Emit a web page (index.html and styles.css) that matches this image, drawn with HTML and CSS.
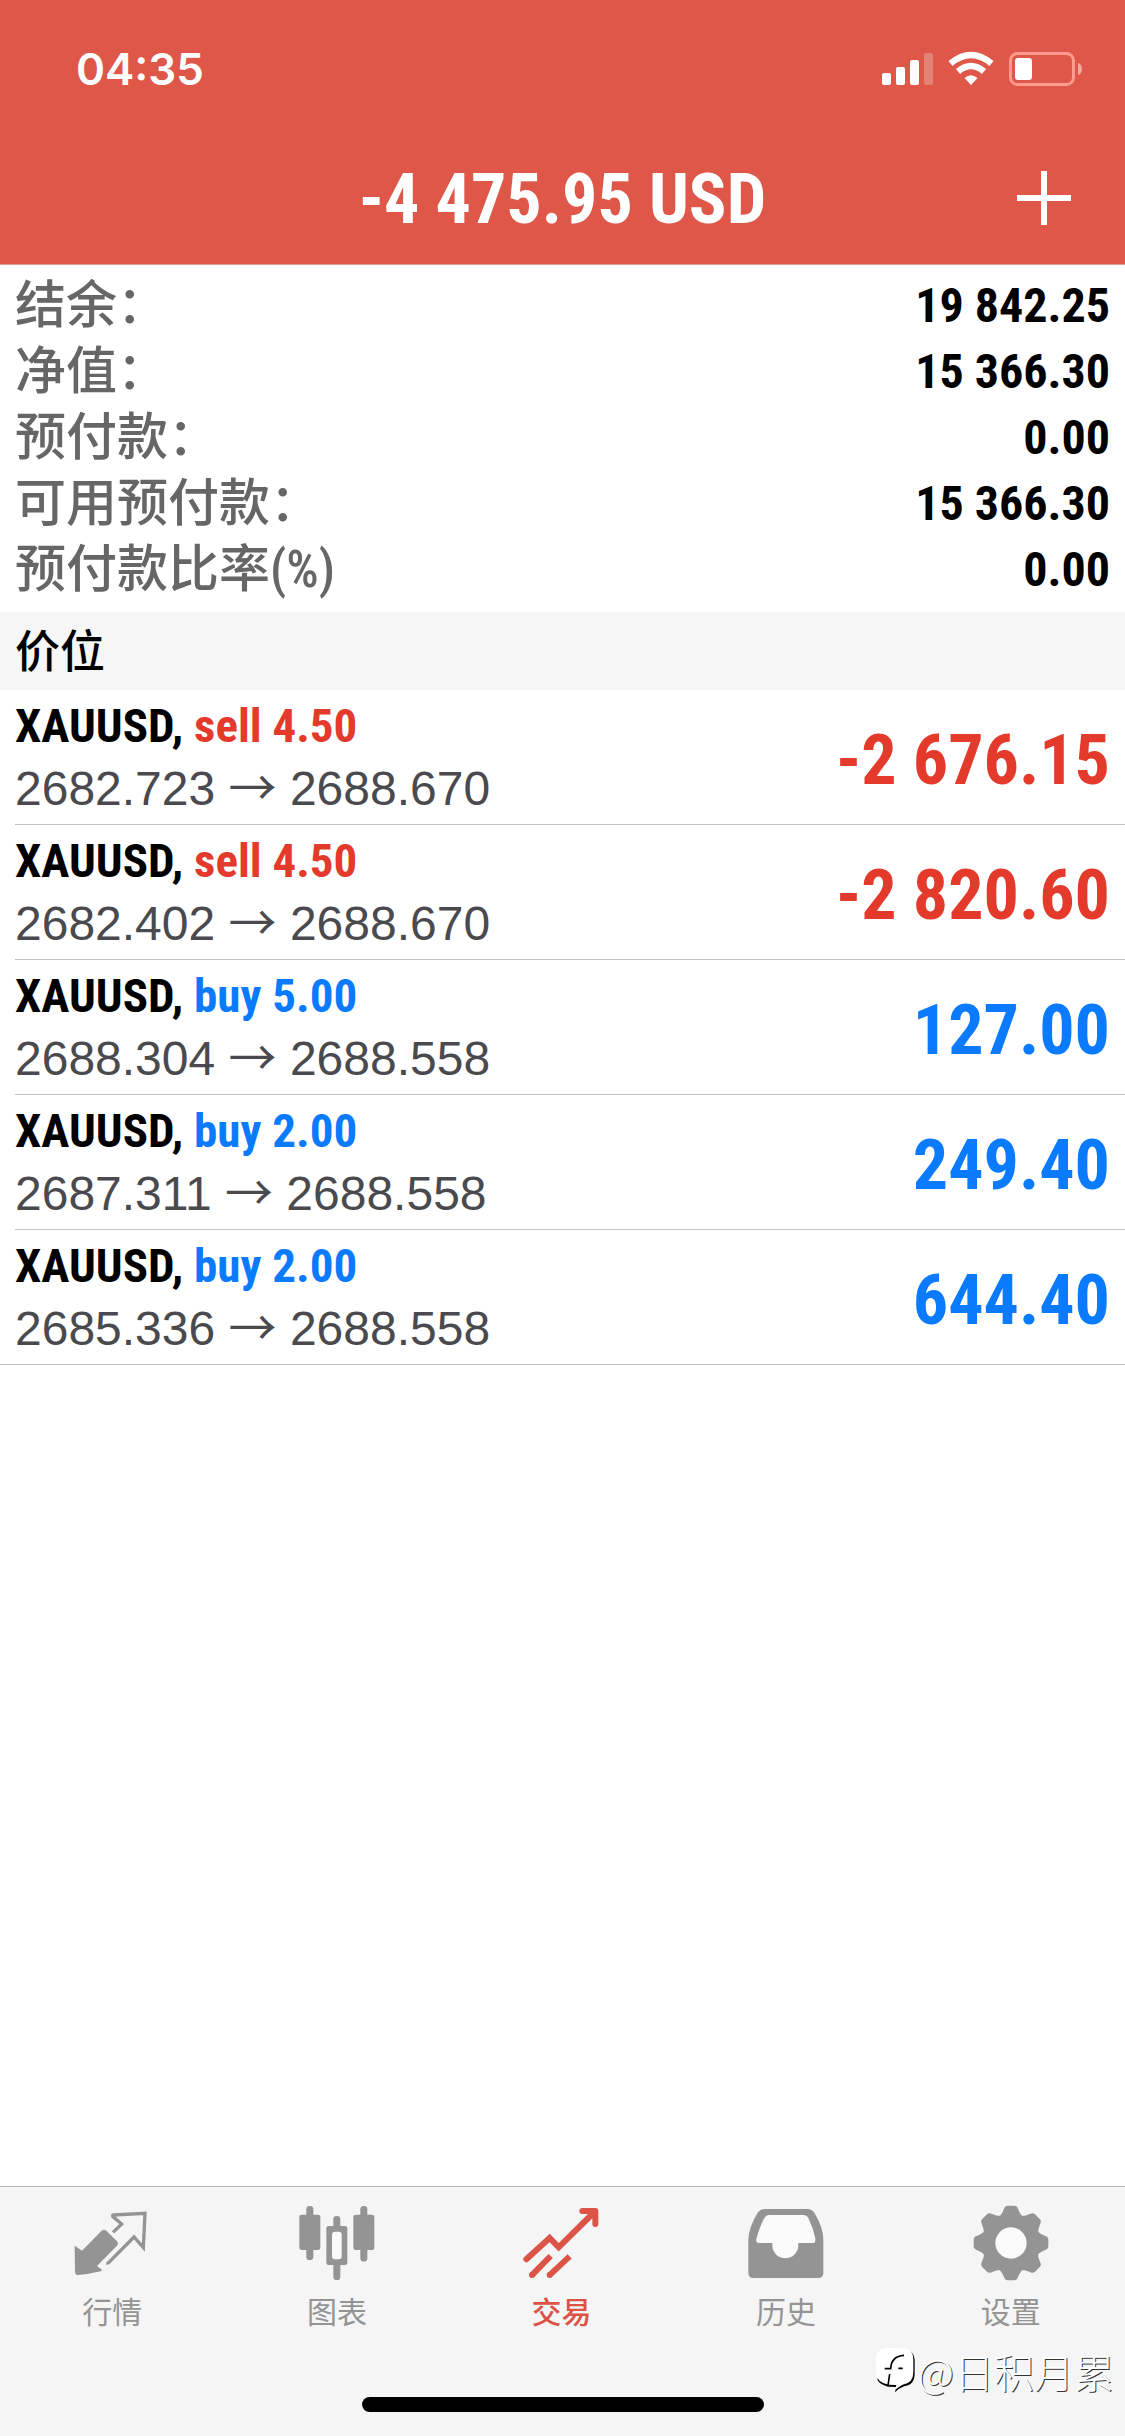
FILE: index.html
```html
<!DOCTYPE html>
<html lang="zh-CN">
<head>
<meta charset="utf-8">
<meta name="viewport" content="width=device-width, initial-scale=1">
<title>交易</title>
<link rel="stylesheet" href="styles.css">
</head>
<body>
<header class="header">
  <div class="status">
    <time class="clock">04:35</time>
    <svg class="status-icons" width="201" height="36" viewBox="0 0 201 36" aria-hidden="true">
      <g fill="#fff">
        <rect x="0" y="22" width="9" height="12" rx="2"/>
        <rect x="14" y="16" width="9" height="18" rx="2"/>
        <rect x="28" y="9" width="9" height="25" rx="2"/>
        <rect x="42" y="2" width="9" height="32" rx="2" opacity=".25"/>
        <path d="M89 34 L82.500 27 Q89 21.500 95.500 27Z"/>
        <rect x="133" y="7" width="17" height="22" rx="3"/>
        <path d="M196 12 Q200 13 200 18 Q200 23 196 24Z" opacity=".5"/>
      </g>
      <g fill="none" stroke="#fff">
        <path d="M68.500 12.500 Q89 -4.500 109.500 12.500" stroke-width="6.500"/>
        <path d="M76 20.500 Q89 9.500 102 20.500" stroke-width="6.500"/>
        <rect x="128.500" y="2.500" width="63" height="31" rx="7" stroke="#ff9b8e" stroke-width="3"/>
      </g>
    </svg>
  </div>
  <div class="titlebar">
    <h1 class="title">-4 475.95 USD</h1>
    <button class="add" type="button" aria-label="新订单">
      <svg width="54" height="54" viewBox="0 0 54 54"><path d="M27 0V54M0 27H54" stroke="#fff" stroke-width="6"/></svg>
    </button>
  </div>
</header>

<main class="content">
  <dl class="summary">
    <div class="summary-row"><dt>结余：</dt><dd>19 842.25</dd></div>
    <div class="summary-row"><dt>净值：</dt><dd>15 366.30</dd></div>
    <div class="summary-row"><dt>预付款：</dt><dd>0.00</dd></div>
    <div class="summary-row"><dt>可用预付款：</dt><dd>15 366.30</dd></div>
    <div class="summary-row"><dt>预付款比率(%)</dt><dd>0.00</dd></div>
  </dl>
  <h2 class="section">价位</h2>
  <ul class="positions">
    <li class="position">
      <div class="deal">
        <p class="symbol">XAUUSD, <span class="sell">sell 4.50</span></p>
        <p class="prices">2682.723 <span class="arrow">→</span> 2688.670</p>
      </div>
      <strong class="profit sell">-2 676.15</strong>
    </li>
    <li class="position">
      <div class="deal">
        <p class="symbol">XAUUSD, <span class="sell">sell 4.50</span></p>
        <p class="prices">2682.402 <span class="arrow">→</span> 2688.670</p>
      </div>
      <strong class="profit sell">-2 820.60</strong>
    </li>
    <li class="position">
      <div class="deal">
        <p class="symbol">XAUUSD, <span class="buy">buy 5.00</span></p>
        <p class="prices">2688.304 <span class="arrow">→</span> 2688.558</p>
      </div>
      <strong class="profit buy">127.00</strong>
    </li>
    <li class="position">
      <div class="deal">
        <p class="symbol">XAUUSD, <span class="buy">buy 2.00</span></p>
        <p class="prices">2687.311 <span class="arrow">→</span> 2688.558</p>
      </div>
      <strong class="profit buy">249.40</strong>
    </li>
    <li class="position">
      <div class="deal">
        <p class="symbol">XAUUSD, <span class="buy">buy 2.00</span></p>
        <p class="prices">2685.336 <span class="arrow">→</span> 2688.558</p>
      </div>
      <strong class="profit buy">644.40</strong>
    </li>
  </ul>
</main>

<footer class="footer">
  <nav class="tabs">
    <a class="tab" href="#quotes">
      <svg class="tab-icon" viewBox="223 105 228 228" aria-hidden="true">
        <path fill="currentColor" d="M225 227L247 242L306 182Q313 176 320 182L352 214Q358 221 352 227L292 288L307 299Q307 303 303 304Q270 312 236 315Q226 315 226 305Z"/>
        <path fill="none" stroke="currentColor" stroke-width="10" d="M340 187L366 162L339 139Q337 135 342 135L436 130L431 233L403 201L327 278Q325 280 320 280"/>
      </svg>
      <span>行情</span>
    </a>
    <a class="tab" href="#charts">
      <svg class="tab-icon" viewBox="896 105 228 228" aria-hidden="true">
        <g fill="currentColor">
          <rect x="897" y="134" width="63" height="106" rx="7"/>
          <rect x="918" y="108" width="21" height="162" rx="10"/>
          <rect x="999" y="138" width="21" height="192" rx="10"/>
          <rect x="978" y="168" width="63" height="117" rx="7"/>
          <rect x="1059" y="134" width="63" height="106" rx="7"/>
          <rect x="1080" y="108" width="21" height="167" rx="10"/>
        </g>
        <rect x="995" y="185" width="29" height="83" rx="9" fill="#fafafa"/>
      </svg>
      <span>图表</span>
    </a>
    <a class="tab active" href="#trade" aria-current="page">
      <svg class="tab-icon" viewBox="311 105 228 228" aria-hidden="true">
        <g fill="none" stroke="currentColor" stroke-width="18">
          <path stroke-linecap="round" d="M321 268L391 204L418 232L522 129"/>
          <path stroke-linecap="round" stroke-linejoin="round" d="M489 123H528V162"/>
          <path d="M337 316L394 258M390 316L451 259"/>
        </g>
        <circle cx="338" cy="315" r="9" fill="currentColor"/>
        <circle cx="391" cy="315" r="9" fill="currentColor"/>
      </svg>
      <span>交易</span>
    </a>
    <a class="tab" href="#history">
      <svg class="tab-icon" viewBox="986 105 228 228" aria-hidden="true">
        <path fill="currentColor" d="M1037 117H1165Q1177 117 1185 128Q1212 172 1212 210V309Q1212 324 1197 324H1003Q987 324 987 309V210Q988 172 1015 128Q1023 117 1037 117Z"/>
        <path fill="#fafafa" d="M1050 135H1152Q1162 135 1167 144Q1182 175 1188 205Q1189 219 1182 219H1137V226A39 39 0 0 1 1059 226V219H1018Q1010 219 1011 208Q1020 170 1035 145Q1040 135 1050 135Z"/>
      </svg>
      <span>历史</span>
    </a>
    <a class="tab" href="#settings">
      <svg class="tab-icon" viewBox="401 106 228 228" aria-hidden="true">
        <defs><path id="tooth" d="M474 146Q488 135 494 117Q497 108 505 108H525Q533 108 536 117Q542 135 556 146Z"/></defs>
        <g fill="currentColor">
          <circle cx="515" cy="220" r="86"/>
          <use href="#tooth"/>
          <use href="#tooth" transform="rotate(45 515 220)"/>
          <use href="#tooth" transform="rotate(90 515 220)"/>
          <use href="#tooth" transform="rotate(135 515 220)"/>
          <use href="#tooth" transform="rotate(180 515 220)"/>
          <use href="#tooth" transform="rotate(225 515 220)"/>
          <use href="#tooth" transform="rotate(270 515 220)"/>
          <use href="#tooth" transform="rotate(315 515 220)"/>
        </g>
        <circle cx="515" cy="220" r="47" fill="#fafafa"/>
      </svg>
      <span>设置</span>
    </a>
  </nav>
  <div class="home-indicator"></div>
  <p class="watermark">
    <svg width="40" height="46" viewBox="0 0 120 138" aria-hidden="true">
      <path d="M40 5H82Q116 5 116 40V76Q116 112 84 115Q70 120 57 133L60 117L36 116Q10 108 4 95Z" fill="#000"/>
      <path d="M36 0H78Q112 0 112 36V72Q112 106 80 110Q68 116 57 126L61 111L38 110Q2 104 0 76V36Q0 0 36 0Z" fill="#fff"/>
      <path d="M26 62H44Q46 24 84 22M67 61H80M41 78L36 113" fill="none" stroke="#000" stroke-width="5"/>
    </svg>
    <span>@日积月累</span>
  </p>
</footer>
</body>
</html>
```
FILE: styles.css
```css
* {
  box-sizing: border-box;
  margin: 0;
  padding: 0;
}

body {
  display: flex;
  flex-direction: column;
  min-height: 100vh;
  background: #fff;
  color: #000;
  font-family: "Liberation Sans", "Noto Sans CJK SC", sans-serif;
}

/* Header */
.header {
  background: #de5748;
  border-bottom: 1px solid #dd9d95;
  color: #fff;
}

.status {
  display: flex;
  align-items: center;
  justify-content: space-between;
  height: 132px;
  padding: 6px 42px 0 76px;
}

.clock {
  font: 600 44px/52px Inter, sans-serif;
}

.titlebar {
  display: grid;
  grid-template-columns: 1fr auto 1fr;
  align-items: center;
  height: 132px;
  padding: 0 54px;
}

.title {
  grid-column: 2;
  padding-top: 2px;
  font: bold 70px/80px "Roboto Condensed", "Liberation Sans", sans-serif;
}

.add {
  display: flex;
  justify-self: end;
  border: 0;
  background: none;
}

/* Account summary */
.content {
  flex: 1;
}

.summary {
  padding: 8px 15px 9px;
}

.summary-row {
  display: flex;
  align-items: center;
  justify-content: space-between;
  height: 66px;
}

.summary dt {
  color: #666;
  font: 500 51px/66px "Roboto Condensed", "Noto Sans CJK SC", sans-serif;
}

.summary dd {
  font: bold 48px/66px "Roboto Condensed", "Liberation Sans", sans-serif;
}

.section {
  padding: 3px 15px 0;
  background: #f6f6f6;
  font: 500 45px/75px "Roboto Condensed", "Noto Sans CJK SC", sans-serif;
}

/* Open positions */
.positions {
  list-style: none;
}

.position {
  display: flex;
  align-items: center;
  justify-content: space-between;
  margin-left: 15px;
  padding: 4px 15px 4px 0;
  border-bottom: 1px solid #c2c2c4;
}

.position:last-child {
  margin-left: 0;
  padding-left: 15px;
}

.symbol {
  font: bold 47px/63px "Roboto Condensed", "Liberation Sans", sans-serif;
}

.prices {
  color: #4a4a4e;
  font-size: 48px;
  line-height: 63px;
}

.arrow {
  font-family: "Noto Sans CJK SC", sans-serif;
  line-height: 1;
}

.profit {
  padding-top: 6px;
  font: bold 70px/80px "Roboto Condensed", "Liberation Sans", sans-serif;
}

.sell {
  color: #e43a2b;
}

.buy {
  color: #0a7aff;
}

/* Tab bar */
.footer {
  position: relative;
  padding-bottom: 24px;
  border-top: 1px solid #b2b2b2;
  background: #f5f5f5;
}

.tabs {
  display: grid;
  grid-template-columns: repeat(5, 1fr);
  padding: 18px 2px 60px 0;
}

.tab {
  display: flex;
  flex-direction: column;
  align-items: center;
  gap: 8px;
  color: #949494;
  font: 400 30px/48px "Roboto Condensed", "Noto Sans CJK SC", sans-serif;
  text-decoration: none;
}

.tab.active {
  color: #dc5347;
  font-weight: 500;
}

.tab-icon {
  width: 76px;
  height: 76px;
}

.home-indicator {
  width: 402px;
  height: 15px;
  margin: 0 auto;
  border-radius: 8px;
  background: #000;
}

.watermark {
  position: absolute;
  right: 11px;
  bottom: 39px;
  display: flex;
  align-items: center;
  gap: 2px;
  color: #fff;
  font: 300 40px/52px "Noto Sans CJK SC", sans-serif;
  text-shadow: 1px 1px 0 #333;
}
```
